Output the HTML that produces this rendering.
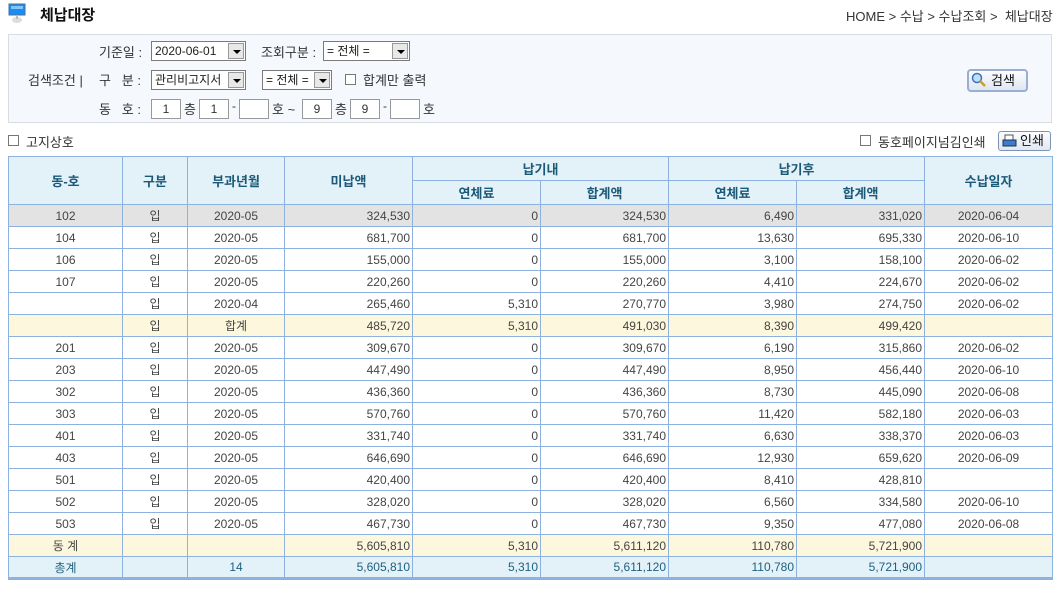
<!DOCTYPE html>
<html><head><meta charset="utf-8"><style>
*{margin:0;padding:0;box-sizing:border-box}
body{width:1060px;height:606px;background:#fff;font-family:"Liberation Sans","Noto Sans CJK KR","NanumGothic",sans-serif;font-size:12px;color:#333;position:relative;overflow:hidden}
.a{position:absolute;white-space:nowrap}
.sel{position:absolute;height:20px;border:1px solid #7a7a7a;background:#fff;font-size:12px;line-height:18px;padding-left:3px;color:#222}
.sel b{position:absolute;right:1px;top:1px;width:16px;height:16px;background:#e8e8e8;border:1px solid #999}
.sel b:after{content:"";position:absolute;left:4px;top:6px;border-left:4px solid transparent;border-right:4px solid transparent;border-top:4px solid #000}
.inp{position:absolute;height:20px;border:1px solid #999;background:#fff;text-align:center;line-height:18px}
.cb{position:absolute;width:11px;height:11px;border:1px solid #777;background:#fff}
table{position:absolute;left:8px;top:156px;border-collapse:collapse;table-layout:fixed;width:1044px}
td,th{border:1px solid #8db2e0;height:22px;font-size:12px;font-weight:normal;color:#444;text-align:center;white-space:nowrap;padding:0 2px}
th{background:#e3f1f8;color:#1a5a78;font-weight:bold;font-size:13px;height:24px}
td.r{text-align:right}
tr.g td{background:#e3e3e3}
tr.y td{background:#fdf7dd}
tr.t td{background:#e3f1f8;color:#1f5f7f;font-size:12px;border-bottom:3px solid #8db2e0}
</style></head><body>
<svg class="a" style="left:8px;top:3px" width="18" height="20"><rect x="1" y="1" width="16" height="11" fill="#1a8ef0" stroke="#4a6fa0"/><rect x="3" y="3" width="12" height="3" fill="#7cc8ff"/><ellipse cx="9" cy="17" rx="5" ry="3" fill="#ddd"/><rect x="8" y="12" width="2" height="4" fill="#bbb"/></svg>
<div class="a" style="left:40px;top:4px;font-size:15px;font-weight:bold;color:#111">체납대장</div>
<div class="a" style="left:846px;top:6px;font-size:13px;color:#333">HOME &gt; 수납 &gt; 수납조회 &gt;&nbsp; 체납대장</div>
<div class="a" style="left:8px;top:34px;width:1044px;height:89px;background:#f5f8fd;border:1px solid #d8dde3"></div>
<div class="a" style="left:99px;top:42px;font-size:13px">기준일 :</div>
<div class="sel" style="left:151px;top:41px;width:95px">2020-06-01<b></b></div>
<div class="a" style="left:261px;top:42px;font-size:13px">조회구분 :</div>
<div class="sel" style="left:323px;top:41px;width:87px">= 전체 =<b></b></div>
<div class="a" style="left:28px;top:70px;font-size:13px">검색조건 |</div>
<div class="a" style="left:99px;top:70px;font-size:13px">구&nbsp;&nbsp;&nbsp;분 :</div>
<div class="sel" style="left:151px;top:70px;width:95px">관리비고지서<b></b></div>
<div class="sel" style="left:262px;top:70px;width:70px">= 전체 =<b></b></div>
<div class="cb" style="left:345px;top:74px"></div>
<div class="a" style="left:363px;top:70px;font-size:13px">합계만 출력</div>
<div class="a" style="left:99px;top:99px;font-size:13px">동&nbsp;&nbsp;&nbsp;호 :</div>
<div class="inp" style="left:151px;top:99px;width:30px">1</div>
<div class="a" style="left:184px;top:99px;font-size:13px">층</div>
<div class="inp" style="left:199px;top:99px;width:30px">1</div>
<div class="a" style="left:232px;top:99px">-</div>
<div class="inp" style="left:239px;top:99px;width:30px"></div>
<div class="a" style="left:272px;top:99px;font-size:13px">호 ~</div>
<div class="inp" style="left:302px;top:99px;width:30px">9</div>
<div class="a" style="left:335px;top:99px;font-size:13px">층</div>
<div class="inp" style="left:350px;top:99px;width:30px">9</div>
<div class="a" style="left:383px;top:99px">-</div>
<div class="inp" style="left:390px;top:99px;width:30px"></div>
<div class="a" style="left:423px;top:99px;font-size:13px">호</div>
<div class="a" style="left:967px;top:69px;width:61px;height:23px;border:2px solid #9aaed0;border-radius:4px;background:linear-gradient(#fbfcff,#dfe6f2);font-size:13px;line-height:19px;padding-left:22px;color:#111">검색</div>
<svg class="a" style="left:971px;top:72px" width="16" height="16"><circle cx="6" cy="6" r="4.5" fill="#bde0ff" stroke="#3f72b5" stroke-width="1.5"/><line x1="9" y1="9" x2="14" y2="14" stroke="#c8a030" stroke-width="2.5"/></svg>
<div class="cb" style="left:8px;top:135px"></div>
<div class="a" style="left:26px;top:132px;font-size:13px">고지상호</div>
<div class="cb" style="left:860px;top:135px"></div>
<div class="a" style="left:878px;top:132px;font-size:13px">동호페이지넘김인쇄</div>
<div class="a" style="left:998px;top:131px;width:53px;height:20px;border:1px solid #7d93b8;border-radius:3px;background:linear-gradient(#fbfcff,#e2e8f2);font-size:13px;line-height:18px;padding-left:21px;color:#111">인쇄</div>
<svg class="a" style="left:1002px;top:134px" width="15" height="14"><rect x="3" y="1" width="8" height="6" fill="#fff" stroke="#555"/><rect x="1" y="6" width="13" height="6" fill="#3a7ed0" stroke="#234"/></svg>
<table>
<colgroup><col style="width:114px"><col style="width:65px"><col style="width:97px"><col style="width:128px"><col style="width:128px"><col style="width:128px"><col style="width:128px"><col style="width:128px"><col style="width:128px"></colgroup>
<tr><th rowspan="2">동-호</th><th rowspan="2">구분</th><th rowspan="2">부과년월</th><th rowspan="2">미납액</th><th colspan="2">납기내</th><th colspan="2">납기후</th><th rowspan="2">수납일자</th></tr>
<tr><th>연체료</th><th>합계액</th><th>연체료</th><th>합계액</th></tr>
<tr class="g"><td>102</td><td>입</td><td>2020-05</td><td class="r">324,530</td><td class="r">0</td><td class="r">324,530</td><td class="r">6,490</td><td class="r">331,020</td><td>2020-06-04</td></tr>
<tr><td>104</td><td>입</td><td>2020-05</td><td class="r">681,700</td><td class="r">0</td><td class="r">681,700</td><td class="r">13,630</td><td class="r">695,330</td><td>2020-06-10</td></tr>
<tr><td>106</td><td>입</td><td>2020-05</td><td class="r">155,000</td><td class="r">0</td><td class="r">155,000</td><td class="r">3,100</td><td class="r">158,100</td><td>2020-06-02</td></tr>
<tr><td>107</td><td>입</td><td>2020-05</td><td class="r">220,260</td><td class="r">0</td><td class="r">220,260</td><td class="r">4,410</td><td class="r">224,670</td><td>2020-06-02</td></tr>
<tr><td></td><td>입</td><td>2020-04</td><td class="r">265,460</td><td class="r">5,310</td><td class="r">270,770</td><td class="r">3,980</td><td class="r">274,750</td><td>2020-06-02</td></tr>
<tr class="y"><td></td><td>입</td><td>합계</td><td class="r">485,720</td><td class="r">5,310</td><td class="r">491,030</td><td class="r">8,390</td><td class="r">499,420</td><td></td></tr>
<tr><td>201</td><td>입</td><td>2020-05</td><td class="r">309,670</td><td class="r">0</td><td class="r">309,670</td><td class="r">6,190</td><td class="r">315,860</td><td>2020-06-02</td></tr>
<tr><td>203</td><td>입</td><td>2020-05</td><td class="r">447,490</td><td class="r">0</td><td class="r">447,490</td><td class="r">8,950</td><td class="r">456,440</td><td>2020-06-10</td></tr>
<tr><td>302</td><td>입</td><td>2020-05</td><td class="r">436,360</td><td class="r">0</td><td class="r">436,360</td><td class="r">8,730</td><td class="r">445,090</td><td>2020-06-08</td></tr>
<tr><td>303</td><td>입</td><td>2020-05</td><td class="r">570,760</td><td class="r">0</td><td class="r">570,760</td><td class="r">11,420</td><td class="r">582,180</td><td>2020-06-03</td></tr>
<tr><td>401</td><td>입</td><td>2020-05</td><td class="r">331,740</td><td class="r">0</td><td class="r">331,740</td><td class="r">6,630</td><td class="r">338,370</td><td>2020-06-03</td></tr>
<tr><td>403</td><td>입</td><td>2020-05</td><td class="r">646,690</td><td class="r">0</td><td class="r">646,690</td><td class="r">12,930</td><td class="r">659,620</td><td>2020-06-09</td></tr>
<tr><td>501</td><td>입</td><td>2020-05</td><td class="r">420,400</td><td class="r">0</td><td class="r">420,400</td><td class="r">8,410</td><td class="r">428,810</td><td></td></tr>
<tr><td>502</td><td>입</td><td>2020-05</td><td class="r">328,020</td><td class="r">0</td><td class="r">328,020</td><td class="r">6,560</td><td class="r">334,580</td><td>2020-06-10</td></tr>
<tr><td>503</td><td>입</td><td>2020-05</td><td class="r">467,730</td><td class="r">0</td><td class="r">467,730</td><td class="r">9,350</td><td class="r">477,080</td><td>2020-06-08</td></tr>
<tr class="y"><td>동 계</td><td></td><td></td><td class="r">5,605,810</td><td class="r">5,310</td><td class="r">5,611,120</td><td class="r">110,780</td><td class="r">5,721,900</td><td></td></tr>
<tr class="t"><td>총계</td><td></td><td>14</td><td class="r">5,605,810</td><td class="r">5,310</td><td class="r">5,611,120</td><td class="r">110,780</td><td class="r">5,721,900</td><td></td></tr>
</table>
</body></html>
